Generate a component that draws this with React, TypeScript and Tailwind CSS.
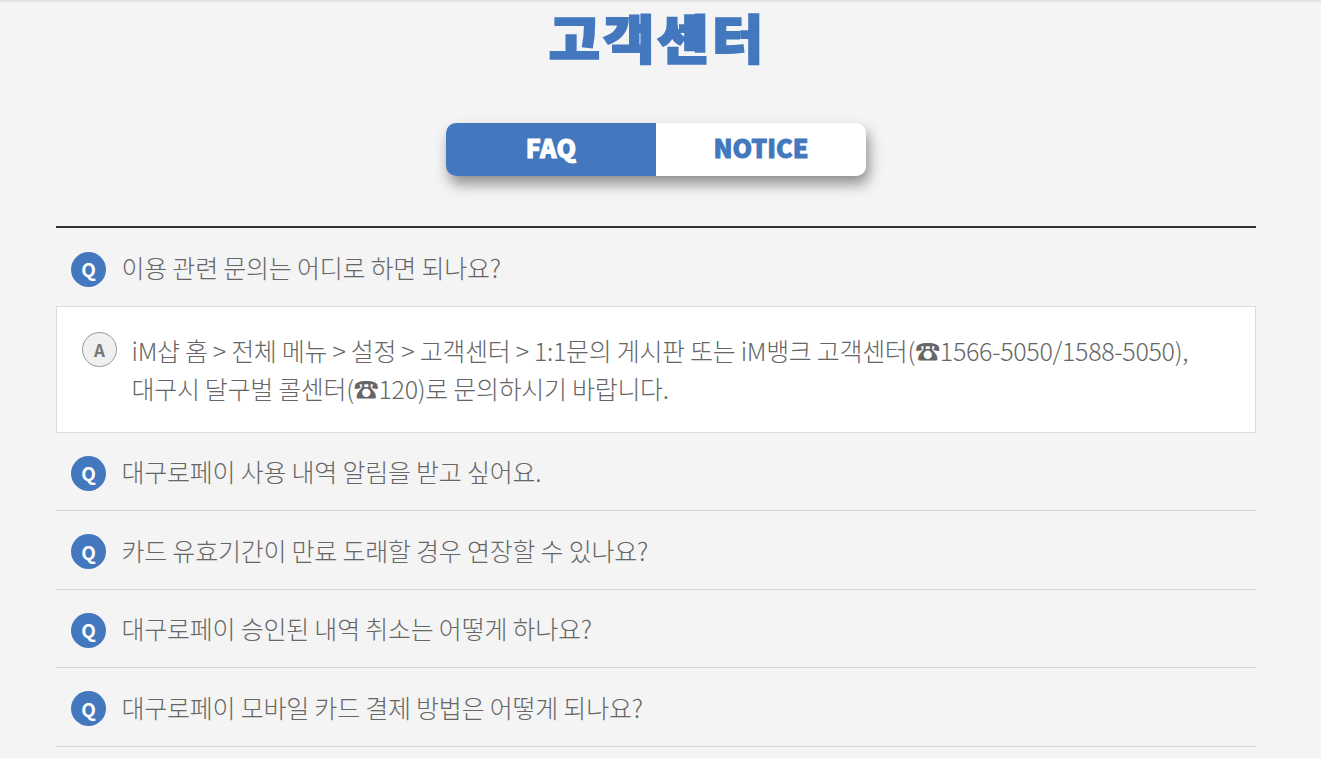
const questions = [
  '대구로페이 사용 내역 알림을 받고 싶어요.',
  '카드 유효기간이 만료 도래할 경우 연장할 수 있나요?',
  '대구로페이 승인된 내역 취소는 어떻게 하나요?',
  '대구로페이 모바일 카드 결제 방법은 어떻게 되나요?',
]

const sans = "font-['Noto_Sans_CJK_KR','Noto_Sans',sans-serif]"

function QRow({ text, border = true }: { text: string; border?: boolean }) {
  return (
    <div className={`flex items-center pl-[15px] ${border ? 'h-[78.5px] border-b border-[#d9d9d9]' : 'h-[78px]'}`}>
      <span className="flex h-[35px] w-[35px] shrink-0 translate-y-[2px] items-center justify-center rounded-full bg-[#4378bf] text-[19px] font-bold text-white">Q</span>
      <span className="ml-[15.5px] text-[25px] leading-[36px] font-light tracking-[-0.22px] text-[#666]">{text}</span>
    </div>
  )
}

export default function App() {
  return (
    <div className={`h-[758px] w-[1321px] overflow-hidden bg-[#f4f4f4] ${sans}`}>
      <div className="h-[3px] bg-gradient-to-b from-[#dcdcdc] to-[#f4f4f4]" />
      <div className="w-[1312px]">
        <h1 className="mt-[-3px] scale-x-[1.07] pl-[3px] text-center text-[52px] leading-[74px] font-black tracking-[3px] text-[#4378bf] [-webkit-text-stroke:2px_#4378bf]">고객센터</h1>
        <div className="mx-auto mt-[49px] flex h-[53px] w-[420px] overflow-hidden rounded-[10px] shadow-[3px_8px_14px_rgba(0,0,0,0.42)]">
          <div className="flex w-1/2 items-center justify-center bg-[#4378bf] pb-[3px] text-[25px] font-black tracking-[0.3px] text-white [-webkit-text-stroke:0.9px_#fff]">FAQ</div>
          <div className="flex w-1/2 items-center justify-center bg-white pb-[3px] text-[25px] font-black text-[#4378bf] [-webkit-text-stroke:0.9px_#4378bf]">NOTICE</div>
        </div>
        <div className="mx-auto mt-[50px] w-[1200px] border-t-2 border-[#333]">
          <QRow text="이용 관련 문의는 어디로 하면 되나요?" border={false} />
          <div className="mb-[-0.5px] flex h-[127px] border border-[#dcdcdc] bg-white pt-[25px] pl-[25px]">
            <span className="flex h-[35px] w-[35px] shrink-0 items-center justify-center rounded-full border border-[#999] bg-[#f0f0f0] text-[17px] font-bold text-[#777]">A</span>
            <p className="ml-[14.5px] -translate-y-[1px] text-[25px] leading-[38px] font-light tracking-[-0.3px] text-[#666]">
              iM샵 홈 &gt; 전체 메뉴 &gt; 설정 &gt; 고객센터 &gt; 1:1문의 게시판 또는 iM뱅크 고객센터(☎1566-5050/1588-5050),
              <br />
              대구시 달구벌 콜센터(☎120)로 문의하시기 바랍니다.
            </p>
          </div>
          {questions.map((q) => (
            <QRow key={q} text={q} />
          ))}
        </div>
      </div>
    </div>
  )
}
